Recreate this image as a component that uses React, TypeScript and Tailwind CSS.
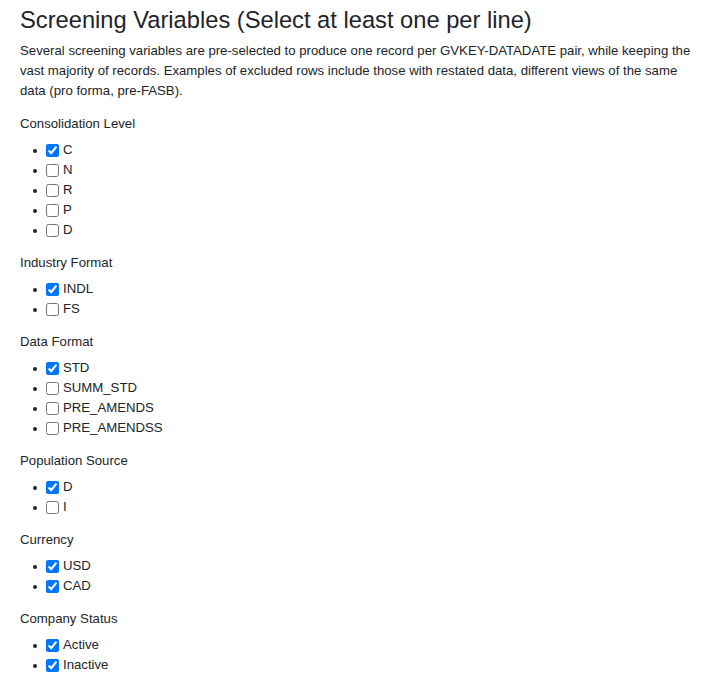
import React from 'react';

interface Group {
  label: string;
  options: { value: string; checked: boolean }[];
}

const groups: Group[] = [
  {
    label: 'Consolidation Level',
    options: [
      { value: 'C', checked: true },
      { value: 'N', checked: false },
      { value: 'R', checked: false },
      { value: 'P', checked: false },
      { value: 'D', checked: false },
    ],
  },
  {
    label: 'Industry Format',
    options: [
      { value: 'INDL', checked: true },
      { value: 'FS', checked: false },
    ],
  },
  {
    label: 'Data Format',
    options: [
      { value: 'STD', checked: true },
      { value: 'SUMM_STD', checked: false },
      { value: 'PRE_AMENDS', checked: false },
      { value: 'PRE_AMENDSS', checked: false },
    ],
  },
  {
    label: 'Population Source',
    options: [
      { value: 'D', checked: true },
      { value: 'I', checked: false },
    ],
  },
  {
    label: 'Currency',
    options: [
      { value: 'USD', checked: true },
      { value: 'CAD', checked: true },
    ],
  },
  {
    label: 'Company Status',
    options: [
      { value: 'Active', checked: true },
      { value: 'Inactive', checked: true },
    ],
  },
];

const CheckGroup: React.FC<Group> = ({ label, options }) => (
  <div>
    <p className="mt-[13px] mb-[6px]">{label}</p>
    <ul className="pl-[13px]">
      {options.map((o) => (
        <li key={o.value} className="flex h-5 items-center">
          <span className="mt-[2px] h-[4px] w-[4px] rounded-full bg-[#212529]" />
          <label className="ml-[9px] flex items-center">
            <input
              type="checkbox"
              defaultChecked={o.checked}
              className="mr-1 h-[13px] w-[13px] accent-[#0075ff]"
            />
            <span>{o.value}</span>
          </label>
        </li>
      ))}
    </ul>
  </div>
);

export default function App() {
  return (
    <div className="min-h-[680px] bg-white px-5 font-['Liberation_Sans',Arial,sans-serif] text-[13.2px] leading-5 text-[#212529]">
      <h2 className="pt-[5px] text-[23.7px] leading-[31px]">
        Screening Variables (Select at least one per line)
      </h2>
      <p className="mt-[5px]">
        Several screening variables are pre-selected to produce one record per
        GVKEY-DATADATE pair, while keeping the vast majority of records.
        Examples of excluded rows include those with restated data, different
        views of the same data (pro forma, pre-FASB).
      </p>
      {groups.map((g) => (
        <CheckGroup key={g.label} {...g} />
      ))}
    </div>
  );
}
